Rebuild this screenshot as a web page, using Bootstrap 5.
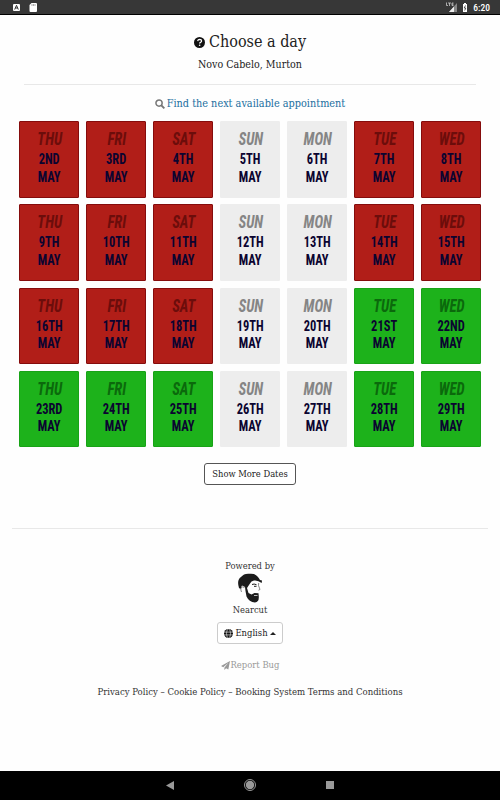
<!DOCTYPE html>
<html lang="en">
<head>
<meta charset="utf-8">
<meta name="viewport" content="width=device-width, initial-scale=1">
<title>Choose a day</title>
<link href="https://cdn.jsdelivr.net/npm/bootstrap@5.3.0/dist/css/bootstrap.min.css" rel="stylesheet">
<style>
body{font-family:"DejaVu Serif Condensed","DejaVu Serif",serif;font-stretch:condensed;font-size:9.3px;line-height:14px;color:#333;background:#fefefe;height:800px;overflow:hidden}
.status{height:15px;background:#373737;border-bottom:1px solid #000;font-family:Roboto,sans-serif;font-size:9.5px;color:#fff}
.status svg,.android svg{display:block}
.clock{line-height:16px;font-weight:500;padding-right:10px}
main{height:756px;white-space:nowrap;padding-top:16px}
.title{font-size:16px;line-height:22px;margin:0;color:#222;font-weight:400}
.place{font-size:10.6px;line-height:14px;margin-top:4px;color:#222}
.rule{height:1px;background:#e8e8e8;margin:13px 24px 0}
.find{font-size:10.8px;line-height:16px;margin-top:11px;color:#1a6e9e;text-decoration:none}
.days{display:grid;grid-template-columns:repeat(7,60.3px);column-gap:6.7px;row-gap:6.6px;grid-auto-rows:76.5px;margin:9.4px 0 0 18.8px}
.day{border:1px solid #850c0c;background:#b11e18;font-family:Roboto,sans-serif;font-weight:700;text-align:center;color:#0b0430;font-size:15px;line-height:17.6px;padding-top:7px;border-radius:1px}
.day span{display:block;transform:scaleX(.83)}
.day .wk{font-style:italic;font-size:18px;line-height:19px;margin-bottom:3px;color:#6c0d0b;transform:translateX(.6px) scaleX(.82)}
.day.shut{background:#ededed;border-color:#ededed}.shut .wk{color:#858585}
.day.open{background:#1db21b;border-color:#18a317}.open .wk{color:#0b690c}
.more{font:inherit;line-height:14px;border:1px solid #555;border-radius:3px;padding:3px 0;width:92px;height:22px;margin-top:16px;color:#222;background:#fff}
.rule2{height:1px;background:#e8e8e8;margin:43px 12px 30px}
.lang{font:inherit;font-size:9.4px;line-height:14px;width:66px;height:22px;border:1px solid #ccc;border-radius:3px;padding:0;background:#fff;color:#222;margin-top:5px}
.globe{margin-right:2px}
.caret{border:3px solid transparent;border-top:0;border-bottom-color:#222;width:0;height:0;margin-left:2px}
.bug{color:#999;margin-top:14px;gap:1px;font-size:9.4px}
.legal{margin-top:13px;font-size:9.5px}
.android{height:29px;background:#000}
</style>
</head>
<body>
<header class="status d-flex justify-content-between">
<svg width="45" height="14"><rect x="13" y="4" width="7" height="7" rx="1" fill="#fff"/><path d="M14.7 9.5 16.5 5.3l1.8 4.2M15.4 8h2.2" stroke="#333" fill="none"/><path d="M31.5 3H36q1 0 1 1v7q0 1-1 1h-5.500q-1 0-1-1V5z" fill="#fff"/><path d="M32 4v2m1.500-2v2M35 4v2" stroke="#777" stroke-width=".6"/></svg>
<div class="d-flex"><svg width="27" height="14"><path d="M11 3v9H3z" fill="#888"/><path d="M8 6.500V12H3z" fill="#eee"/><path d="M.5 2.500v3h1.500M2 3h3M3.500 3v3M7.500 3H6v2.500h1.500M6 4.200h1.500" stroke="#ddd" stroke-width=".7" fill="none"/><path d="M17 4h1V3h2v1h1v8h-4z" fill="#fff"/><path d="M19.500 5.500 18.200 8h1.600L18.700 10.500" stroke="#333" stroke-width=".8" fill="none"/></svg><span class="clock">6:20</span></div>
</header>
<main class="text-center">
<h1 class="title d-flex justify-content-center align-items-center"><svg class="me-1" width="11" height="11" viewBox="0 0 16 16"><circle cx="8" cy="8" r="8" fill="#111"/><path d="M5.300 6q.5-2.500 2.900-2.500Q11 3.600 11 5.800q0 1.200-1.500 2Q8.200 8.400 8.200 9.500" fill="none" stroke="#fff" stroke-width="1.900"/><circle cx="8.200" cy="12" r="1.200" fill="#fff"/></svg><span>Choose a day</span></h1>
<div class="place">Novo Cabelo, Murton</div>
<div class="rule"></div>
<a class="find d-flex justify-content-center align-items-center" href="#"><svg class="globe" width="10" height="10" viewBox="0 0 16 16" fill="none" stroke="#777" stroke-width="2.400"><circle cx="6.500" cy="6.500" r="5"/><path d="m10 10 5 5" stroke-width="3"/></svg><span>Find the next available appointment</span></a>
<section class="days">
<div class="day"><span class="wk">THU</span><span>2ND</span><span>MAY</span></div><div class="day"><span class="wk">FRI</span><span>3RD</span><span>MAY</span></div><div class="day"><span class="wk">SAT</span><span>4TH</span><span>MAY</span></div><div class="day shut"><span class="wk">SUN</span><span>5TH</span><span>MAY</span></div><div class="day shut"><span class="wk">MON</span><span>6TH</span><span>MAY</span></div><div class="day"><span class="wk">TUE</span><span>7TH</span><span>MAY</span></div><div class="day"><span class="wk">WED</span><span>8TH</span><span>MAY</span></div>
<div class="day"><span class="wk">THU</span><span>9TH</span><span>MAY</span></div><div class="day"><span class="wk">FRI</span><span>10TH</span><span>MAY</span></div><div class="day"><span class="wk">SAT</span><span>11TH</span><span>MAY</span></div><div class="day shut"><span class="wk">SUN</span><span>12TH</span><span>MAY</span></div><div class="day shut"><span class="wk">MON</span><span>13TH</span><span>MAY</span></div><div class="day"><span class="wk">TUE</span><span>14TH</span><span>MAY</span></div><div class="day"><span class="wk">WED</span><span>15TH</span><span>MAY</span></div>
<div class="day"><span class="wk">THU</span><span>16TH</span><span>MAY</span></div><div class="day"><span class="wk">FRI</span><span>17TH</span><span>MAY</span></div><div class="day"><span class="wk">SAT</span><span>18TH</span><span>MAY</span></div><div class="day shut"><span class="wk">SUN</span><span>19TH</span><span>MAY</span></div><div class="day shut"><span class="wk">MON</span><span>20TH</span><span>MAY</span></div><div class="day open"><span class="wk">TUE</span><span>21ST</span><span>MAY</span></div><div class="day open"><span class="wk">WED</span><span>22ND</span><span>MAY</span></div>
<div class="day open"><span class="wk">THU</span><span>23RD</span><span>MAY</span></div><div class="day open"><span class="wk">FRI</span><span>24TH</span><span>MAY</span></div><div class="day open"><span class="wk">SAT</span><span>25TH</span><span>MAY</span></div><div class="day shut"><span class="wk">SUN</span><span>26TH</span><span>MAY</span></div><div class="day shut"><span class="wk">MON</span><span>27TH</span><span>MAY</span></div><div class="day open"><span class="wk">TUE</span><span>28TH</span><span>MAY</span></div><div class="day open"><span class="wk">WED</span><span>29TH</span><span>MAY</span></div>
</section>
<button class="more">Show More Dates</button>
<div class="rule2"></div>
<footer>
<div class="powered">Powered by</div>
<svg class="logo" width="28" height="30" viewBox="0 0 28 30"><path d="M3 15Q.5 7 5 4 8 0 14 .8q5-.3 7 2.200 2 2 3 4l2 .5-.3 2.500Q22 7 18 7.500q-3 .5-4 3L13 12l-2 3 1.500 5 3 1.500 3-1.500 4 .3.300 3.700Q23 29 19 29.500q-6-.5-8.500-6L9.500 18 9 14 6 12.500 4.500 16z" fill="#1b1b1b"/><path d="M8.500 14.500q-3-1.500-3.500.5t.5 4M22.700 10l-.2 2.500 1.500 4-1.500.7" fill="none" stroke="#555" stroke-width=".7"/><path d="M16 11.500q2-1 4.500.2M18 13.300h2.500" fill="none" stroke="#1b1b1b"/><path d="M18 22.500h3.500" stroke="#fff" stroke-width=".7"/></svg>
<div class="name">Nearcut</div>
<button class="lang"><span class="d-flex justify-content-center align-items-center"><svg class="globe" width="9" height="9" viewBox="0 0 16 16"><circle cx="8" cy="8" r="8" fill="#111"/><path d="M0 5.500h16M0 10.500h16" stroke="#fff"/><ellipse cx="8" cy="8" rx="3.500" ry="8" fill="none" stroke="#fff"/></svg><span>English</span><i class="caret"></i></span></button>
<div class="bug d-flex justify-content-center align-items-center"><svg width="9" height="9" viewBox="0 0 16 16"><path d="M16 0 0 9l4 2 9-8-7 9v4l3-3 4 2z" fill="#999"/></svg><span>Report Bug</span></div>
<div class="legal">Privacy Policy – Cookie Policy – Booking System Terms and Conditions</div>
</footer>
</main>
<nav class="android"><svg width="500" height="29"><path d="M174 10v9l-8-4.500z" fill="#999"/><circle cx="250" cy="14" r="5.500" fill="none" stroke="#999"/><circle cx="250" cy="14" r="4.200" fill="#999"/><path d="M326 10h8v8h-8z" fill="#999"/></svg></nav>
</body>
</html>
